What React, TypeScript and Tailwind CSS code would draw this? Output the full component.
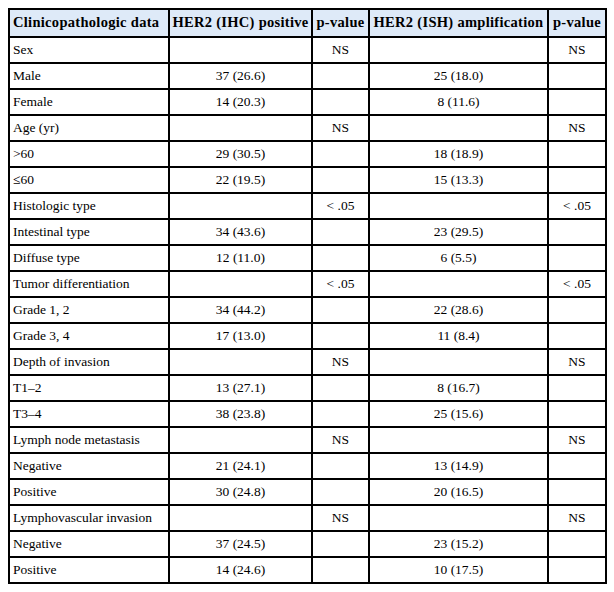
const rows: [string, string, string, string, string][] = [
  ['Sex', '', 'NS', '', 'NS'],
  ['Male', '37 (26.6)', '', '25 (18.0)', ''],
  ['Female', '14 (20.3)', '', '8 (11.6)', ''],
  ['Age (yr)', '', 'NS', '', 'NS'],
  ['>60', '29 (30.5)', '', '18 (18.9)', ''],
  ['≤60', '22 (19.5)', '', '15 (13.3)', ''],
  ['Histologic type', '', '< .05', '', '< .05'],
  ['Intestinal type', '34 (43.6)', '', '23 (29.5)', ''],
  ['Diffuse type', '12 (11.0)', '', '6 (5.5)', ''],
  ['Tumor differentiation', '', '< .05', '', '< .05'],
  ['Grade 1, 2', '34 (44.2)', '', '22 (28.6)', ''],
  ['Grade 3, 4', '17 (13.0)', '', '11 (8.4)', ''],
  ['Depth of invasion', '', 'NS', '', 'NS'],
  ['T1–2', '13 (27.1)', '', '8 (16.7)', ''],
  ['T3–4', '38 (23.8)', '', '25 (15.6)', ''],
  ['Lymph node metastasis', '', 'NS', '', 'NS'],
  ['Negative', '21 (24.1)', '', '13 (14.9)', ''],
  ['Positive', '30 (24.8)', '', '20 (16.5)', ''],
  ['Lymphovascular invasion', '', 'NS', '', 'NS'],
  ['Negative', '37 (24.5)', '', '23 (15.2)', ''],
  ['Positive', '14 (24.6)', '', '10 (17.5)', ''],
]

const headers = ['Clinicopathologic data', 'HER2 (IHC) positive', 'p-value', 'HER2 (ISH) amplification', 'p-value']

// separate borders: outer left/top on table, each cell draws its right/bottom edge
export default function App() {
  return (
    <div className="bg-white min-h-[592px] w-[614px] pt-[8px] pl-[8px]">
      <table
        className="border-separate border-spacing-0 border-l-[2px] border-t-[2px] border-black text-[13.5px] text-black table-fixed w-[597px]"
        style={{ fontFamily: '"Liberation Serif", "Times New Roman", serif' }}
      >
        <colgroup>
          <col className="w-[160px]" />
          <col className="w-[143px]" />
          <col className="w-[57px]" />
          <col className="w-[179px]" />
          <col className="w-[58px]" />
        </colgroup>
        <thead>
          <tr className="h-[28px] bg-[#deeaf8]">
            {headers.map((h, i) => (
              <th
                key={i}
                className={
                  i === 0
                    ? 'border-r-[2px] border-b-[2px] border-black font-bold whitespace-nowrap px-[3px] text-left text-[14.5px] tracking-[0.3px]'
                    : 'border-r-[2px] border-b-[2px] border-black font-bold whitespace-nowrap px-[2px] text-center text-[14.5px] tracking-[0.3px]'
                }
              >
                {h}
              </th>
            ))}
          </tr>
        </thead>
        <tbody>
          {rows.map((r, ri) => (
            <tr key={ri} className="h-[26px]">
              {r.map((c, ci) => (
                <td
                  key={ci}
                  className={
                    ci === 0
                      ? 'border-r-[2px] border-b-[2px] border-black whitespace-nowrap px-[3px] py-0 text-left'
                      : 'border-r-[2px] border-b-[2px] border-black whitespace-nowrap px-[3px] py-0 text-center'
                  }
                >
                  {c}
                </td>
              ))}
            </tr>
          ))}
        </tbody>
      </table>
    </div>
  )
}
